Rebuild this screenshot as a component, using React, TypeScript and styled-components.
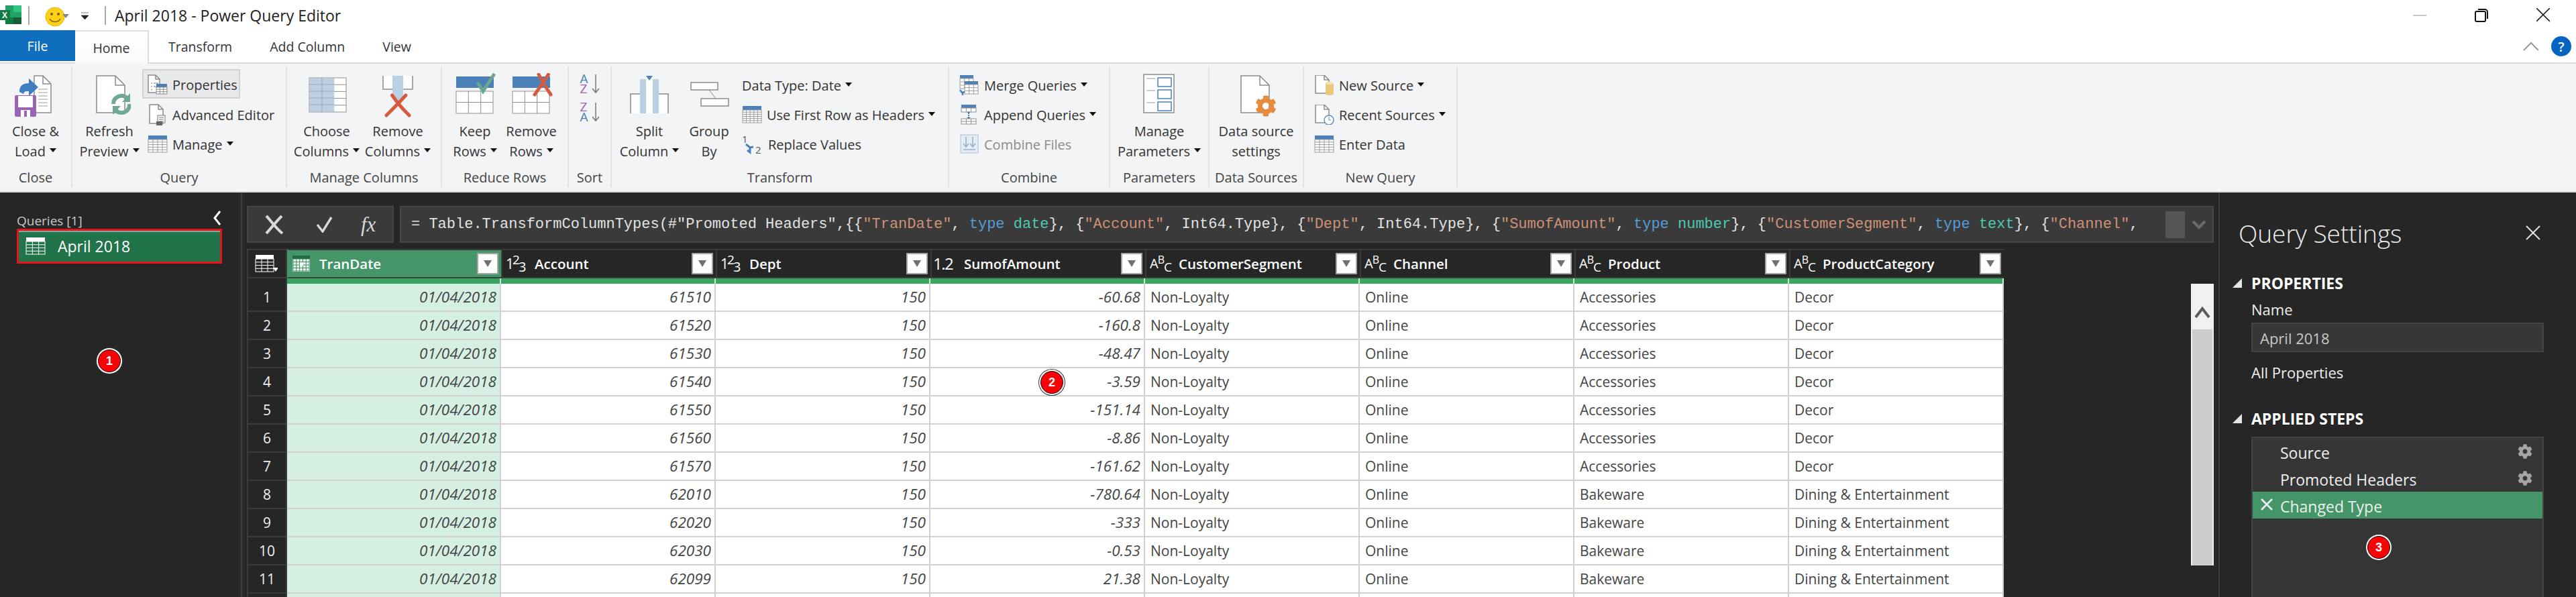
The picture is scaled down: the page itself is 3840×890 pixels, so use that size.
import React from 'react';
import styled, { createGlobalStyle } from 'styled-components';
import { FaCog } from 'react-icons/fa';

const GlobalStyle = createGlobalStyle`
  html, body {
    margin: 0;
    padding: 0;
    width: 3840px;
    height: 890px;
    overflow: hidden;
    background: #262626;
    font-family: "Open Sans", "Noto Sans", sans-serif;
  }
  * { box-sizing: border-box; }
`;

const Page = styled.div`
  width: 3840px;
  height: 890px;
  display: flex;
  flex-direction: column;
  overflow: hidden;
`;

/* title bar */
const TitleBar = styled.div`
  height: 45px;
  background: #fff;
  display: flex;
  align-items: center;
  flex: none;
`;

const QatDivider = styled.div<{ $left?: number }>`
  width: 2px;
  height: 28px;
  margin-left: ${(p) => p.$left || 0}px;
  background: #a8a8a8;
`;

const QatGlyph = styled.svg<{ $left: number }>`
  margin-left: ${(p) => p.$left}px;
`;

const TitleText = styled.div`
  margin-left: 13px;
  font-size: 23px;
  color: #222;
`;

const WindowButtons = styled.div`
  margin-left: auto;
  display: flex;
  align-items: center;
  gap: 72px;
  padding-right: 39px;
`;

const Caret = styled.span`
  display: inline-block;
  width: 0;
  height: 0;
  margin-left: 6px;
  vertical-align: 6px;
  border-left: 5px solid transparent;
  border-right: 5px solid transparent;
  border-top: 6px solid #111;
`;

/* tabs */
const TabRow = styled.div`
  height: 48px;
  background: #fff;
  display: flex;
  flex: none;
  position: relative;
  z-index: 1;
`;

const FileTab = styled.div`
  width: 112px;
  height: 46px;
  background: #106ebe;
  color: #fff;
  font-size: 19.5px;
  display: flex;
  align-items: center;
  justify-content: center;
`;

const Tab = styled.div<{ $active?: boolean }>`
  height: ${(p) => (p.$active ? '50px' : '48px')};
  padding: 0 ${(p) => (p.$active ? '0' : '28px')};
  width: ${(p) => (p.$active ? '110px' : 'auto')};
  margin-right: ${(p) => (p.$active ? '1px' : '0')};
  flex: none;
  display: flex;
  align-items: center;
  justify-content: center;
  font-size: 19.5px;
  color: #333;
  background: #fff;
  white-space: nowrap;
  ${(p) => p.$active && 'border: 2px solid #dcdcdc; border-bottom: none; border-left: none; background: linear-gradient(#fff, #f9f9fa);'}
`;

const TabTools = styled.div`
  margin-left: auto;
  display: flex;
  align-items: center;
  gap: 18px;
  padding: 0 7px 0 0;
`;

const HelpDot = styled.div`
  width: 30px;
  height: 30px;
  border-radius: 50%;
  background: #0563c1;
  color: #fff;
  font-size: 20px;
  font-weight: 600;
  display: flex;
  align-items: center;
  justify-content: center;
`;

/* ribbon */
const Ribbon = styled.div`
  height: 194px;
  flex: none;
  display: flex;
  align-items: flex-start;
  background: #f3f4f6;
  border-top: 2px solid #dcdcdc;
  border-bottom: 2px solid #d9d9d9;
  padding-top: 4px;
`;

const Group = styled.div<{ $w: number }>`
  width: ${(p) => p.$w}px;
  height: 180px;
  flex: none;
  display: flex;
  flex-direction: column;
  border-right: 2px solid #e2e3e5;
  font-size: 20px;
  color: #333;
`;

const GroupBody = styled.div<{ $pad?: number }>`
  flex: 1;
  display: flex;
  padding-left: ${(p) => p.$pad || 0}px;
`;

const GroupLabel = styled.div`
  height: 28px;
  line-height: 28px;
  text-align: center;
  font-size: 20px;
  color: #444;
  white-space: nowrap;
`;

const BigButton = styled.div<{ $w: number }>`
  width: ${(p) => p.$w}px;
  flex: none;
  display: flex;
  flex-direction: column;
  align-items: center;
`;

const BigIcon = styled.div`
  height: 82px;
  padding-top: 10px;
  display: flex;
  justify-content: center;
`;

const BigLine = styled.div`
  height: 30px;
  line-height: 30px;
  white-space: nowrap;
`;

const SmallColumn = styled.div<{ $pad?: number }>`
  display: flex;
  flex-direction: column;
  align-items: flex-start;
  padding-left: ${(p) => p.$pad || 0}px;
  padding-top: 4px;
`;

const SmallRow = styled.div<{ $hot?: boolean; $dim?: boolean }>`
  height: 44px;
  padding: 4px 8px 0 8px;
  display: flex;
  align-items: center;
  gap: 7px;
  white-space: nowrap;
  color: ${(p) => (p.$dim ? '#8b8b8b' : '#333')};
  ${(p) => p.$hot && 'background: #e8e9eb; border: 2px solid #d2d2d2; padding: 2px 2px 0 6px;'}
`;

const SortColumn = styled.div`
  width: 62px;
  display: flex;
  flex-direction: column;
  align-items: center;
  gap: 12px;
  padding-top: 11px;
`;

const SortMark = styled.div`
  display: flex;
  align-items: flex-start;
  gap: 5px;
`;

const SortLetters = styled.div`
  display: flex;
  flex-direction: column;
  font-size: 19px;
  line-height: 15px;
`;

const SortLetter = styled.span<{ $color: string }>`
  color: ${(p) => p.$color};
`;

/* main */
const Main = styled.div`
  flex: 1;
  display: flex;
  min-height: 0;
`;

const QueriesPane = styled.div`
  width: 361px;
  flex: none;
  border-right: 2px solid #3e3e3e;
  padding: 29px 28px 0 25px;
  position: relative;
`;

const PaneHead = styled.div`
  height: 25px;
  display: flex;
  justify-content: space-between;
  align-items: center;
  color: #c8c8c8;
  font-size: 19px;
`;

const CollapseIcon = styled.svg`
  margin-top: -8px;
`;

const QueryItem = styled.div`
  height: 52px;
  background: #21734a;
  border: 3px solid #e8141c;
  box-shadow: inset 0 2px 0 #8aa897;
  display: flex;
  align-items: center;
  gap: 18px;
  padding-left: 10px;
  color: #fff;
  font-size: 23px;
`;

const Badge = styled.div<{ $x: number; $y: number }>`
  position: absolute;
  left: ${(p) => p.$x}px;
  top: ${(p) => p.$y}px;
  width: 34px;
  height: 34px;
  border-radius: 50%;
  background: #fb0007;
  border: 1px solid #111;
  box-shadow: 0 0 0 2px #fff, 0 0 0 3px #333;
  color: #fff;
  font: bold 18px "Liberation Sans", sans-serif;
  display: flex;
  align-items: center;
  justify-content: center;
  z-index: 2;
`;

const Center = styled.div`
  width: 2948px;
  flex: none;
  padding: 20px 7px 0 7px;
  border-right: 2px solid #3e3e3e;
`;

const FormulaBar = styled.div`
  display: flex;
  gap: 9px;
  height: 55px;
`;

const FormulaButtons = styled.div`
  width: 219px;
  flex: none;
  background: #3a3a3a;
  border: 2px solid #464646;
  display: flex;
  align-items: center;
  padding-left: 24px;
  gap: 47px;
`;

const FxText = styled.span`
  font: italic 31px "Liberation Serif", serif;
  color: #d8d8d8;
  margin-left: -6px;
`;

const FormulaInput = styled.div`
  flex: 1;
  min-width: 0;
  background: #3a3a3a;
  border: 2px solid #464646;
  display: flex;
  align-items: center;
  padding-left: 15px;
`;

const FormulaText = styled.div`
  flex: 1;
  min-width: 0;
  overflow: hidden;
  white-space: pre;
  font: 22px "Liberation Mono", monospace;
  line-height: 30px;
  color: #e2e2e2;
`;

const Str = styled.span` color: #ce9178; `;
const Kw = styled.span` color: #569cd6; `;
const Ty = styled.span` color: #4ec9b0; `;

const FormulaThumb = styled.div`
  width: 29px;
  height: 40px;
  background: #555;
  flex: none;
`;

const FormulaChevron = styled.div`
  width: 41px;
  flex: none;
  display: flex;
  justify-content: center;
`;

const GridArea = styled.div`
  margin-top: 9px;
  display: flex;
  justify-content: space-between;
  position: relative;
`;

const Grid = styled.div`
  display: grid;
  grid-template-columns: 60px 319px repeat(7, 320px);
  grid-auto-rows: auto;
  width: 2619px;
`;

const HeadCell = styled.div<{ $selected?: boolean }>`
  height: 44px;
  background: ${(p) => (p.$selected ? '#449669' : '#262626')};
  border-top: 2px solid #3c3c3c;
  border-bottom: 2px solid #3c3c3c;
  border-left: 2px solid ${(p) => (p.$selected ? '#449669' : '#3c3c3c')};
  display: flex;
  align-items: center;
  padding: 0 4px 0 5px;
  gap: 13px;
  color: #fff;
  font-size: 20.5px;
  font-weight: 600;
`;

const CornerCell = styled(HeadCell)`
  border-right: 2px solid #3c3c3c;
  padding: 0 0 0 10px;
`;

const HeadName = styled.span`
  flex: 1;
  white-space: nowrap;
`;

const FilterButton = styled.div`
  width: 32px;
  height: 32px;
  background: #fff;
  border: 2px solid #a5a5a5;
  display: flex;
  align-items: center;
  justify-content: center;
  flex: none;
  &::after {
    content: '';
    border-left: 6px solid transparent;
    border-right: 6px solid transparent;
    border-top: 10px solid #6f6f6f;
  }
`;

const TypeGlyph = styled.span`
  width: 30px;
  flex: none;
  font-size: 21px;
  font-weight: 400;
  display: flex;
  align-items: center;
  line-height: 1;
  white-space: nowrap;
`;

const DecimalGlyph = styled(TypeGlyph)`
  font-size: 24px;
  letter-spacing: -1.5px;
  margin-left: -3px;
  margin-right: 3px;
`;

const BaseLetter = styled.span`
  font-size: 20px;
`;

const SupGlyph = styled.span<{ $small?: boolean }>`
  font-size: ${(p) => (p.$small ? 16 : 19)}px;
  margin-left: ${(p) => (p.$small ? -1 : -2)}px;
  transform: translateY(-6px);
`;

const SubGlyph = styled.span<{ $small?: boolean }>`
  font-size: ${(p) => (p.$small ? 19 : 20)}px;
  margin-left: ${(p) => (p.$small ? -1 : -2)}px;
  transform: translateY(5px);
`;

const QualityNum = styled.div`
  height: 8px;
  background: #262626;
  border-left: 2px solid #3c3c3c;
  border-right: 2px solid #3c3c3c;
`;

const QualityBar = styled.div`
  height: 8px;
  background: #38a560;
  border-right: 2px solid #cfe9da;
`;

const RowNum = styled.div`
  height: 42px;
  background: #262626;
  border: 2px solid #3c3c3c;
  border-top: none;
  color: #f0f0f0;
  font-size: 21px;
  display: flex;
  align-items: center;
  justify-content: center;
`;

const Cell = styled.div<{ $num?: boolean; $selected?: boolean }>`
  height: 42px;
  background: ${(p) => (p.$selected ? '#d5f0e2' : '#fff')};
  border-bottom: 2px solid #d0d0d0;
  border-right: 2px solid #d0d0d0;
  color: #444;
  font-size: ${(p) => (p.$num ? 22.5 : 21)}px;
  font-style: ${(p) => (p.$num ? 'italic' : 'normal')};
  text-align: ${(p) => (p.$num ? 'right' : 'left')};
  padding: 0 5px 0 8px;
  line-height: 40px;
  white-space: nowrap;
  overflow: hidden;
`;

const ScrollBar = styled.div`
  width: 34px;
  margin-top: 52px;
  height: 420px;
  flex: none;
  background: #f0f0f0;
  display: flex;
  flex-direction: column;
`;

const ScrollUp = styled.div`
  height: 68px;
  flex: none;
  padding-bottom: 16px;
  display: flex;
  align-items: flex-end;
  justify-content: center;
`;

const ScrollThumb = styled.div`
  flex: 1;
  margin: 0 2px;
  background: #cdcdcd;
`;

/* query settings */
const SettingsPane = styled.div`
  flex: 1;
  padding: 31px 48px 0 47px;
  color: #f0f0f0;
`;

const SettingsHead = styled.div`
  display: flex;
  justify-content: space-between;
  align-items: center;
  margin-left: -19px;
  height: 58px;
  font-size: 37px;
  font-weight: 300;
  color: #eee;
  padding-right: 5px;
`;

const SectionTitle = styled.div<{ $top: number }>`
  position: relative;
  margin-top: ${(p) => p.$top}px;
  font-size: 23px;
  font-weight: 700;
  color: #fff;
  height: 30px;
  line-height: 30px;
  white-space: nowrap;
  &::before {
    content: '';
    position: absolute;
    left: -28px;
    top: 8px;
    border-left: 14px solid transparent;
    border-bottom: 14px solid #e6e6e6;
  }
`;

const FieldLabel = styled.div<{ $top: number }>`
  margin-top: ${(p) => p.$top}px;
  font-size: 22px;
  height: 30px;
  line-height: 30px;
  color: #eee;
`;

const NameInput = styled.div`
  height: 44px;
  margin-top: 5px;
  background: #373737;
  border: 2px solid #444;
  padding-left: 11px;
  line-height: 42px;
  font-size: 22px;
  color: #c8c8c8;
`;

const StepsBox = styled.div`
  position: relative;
  height: 300px;
  margin-top: 12px;
  background: #363636;
  border: 2px solid #444;
`;

const Step = styled.div<{ $selected?: boolean }>`
  height: 40px;
  display: flex;
  align-items: center;
  padding: 0 15px 0 41px;
  font-size: 23px;
  background: ${(p) => (p.$selected ? '#449669' : 'transparent')};
  color: #eee;
  position: relative;
`;

const StepName = styled.span`
  flex: 1;
  padding-top: 4px;
`;

const StepDelete = styled.span`
  position: absolute;
  left: 11px;
  top: 9px;
  display: flex;
`;

const COLUMNS: { name: string; type: 'date' | 'int' | 'dec' | 'text' }[] = [
  { name: 'TranDate', type: 'date' },
  { name: 'Account', type: 'int' },
  { name: 'Dept', type: 'int' },
  { name: 'SumofAmount', type: 'dec' },
  { name: 'CustomerSegment', type: 'text' },
  { name: 'Channel', type: 'text' },
  { name: 'Product', type: 'text' },
  { name: 'ProductCategory', type: 'text' },
];

const ACCOUNTS = ['61510', '61520', '61530', '61540', '61550', '61560', '61570', '62010', '62020', '62030', '62099'];
const AMOUNTS = ['-60.68', '-160.8', '-48.47', '-3.59', '-151.14', '-8.86', '-161.62', '-780.64', '-333', '-0.53', '21.38'];

// draws a ruled table, used by most of the ribbon icons
const Ruled = ({ x, y, w, h, cols, rows, stroke = '#8e8e8e', fill = '#fff' }: {
  x: number; y: number; w: number; h: number; cols: number; rows: number; stroke?: string; fill?: string;
}) => {
  const lines = [];
  for (let i = 1; i < cols; i += 1) {
    const lx = x + (w * i) / cols;
    lines.push(<line key={`c${i}`} x1={lx} x2={lx} y1={y} y2={y + h} stroke={stroke} />);
  }
  for (let i = 1; i < rows; i += 1) {
    const ly = y + (h * i) / rows;
    lines.push(<line key={`r${i}`} x1={x} x2={x + w} y1={ly} y2={ly} stroke={stroke} />);
  }
  return (
    <g>
      <rect x={x} y={y} width={w} height={h} fill={fill} stroke={stroke} />
      {lines}
    </g>
  );
};

const PageShape = ({ x, y, w, h, fold = 12 }: { x: number; y: number; w: number; h: number; fold?: number }) => (
  <g fill="#fff" stroke="#8a8a8a" strokeWidth="1.5">
    <path d={`M${x} ${y}H${x + w - fold}L${x + w} ${y + fold}V${y + h}H${x}Z`} />
    <path d={`M${x + w - fold} ${y}V${y + fold}H${x + w}`} fill="none" />
  </g>
);

const RedCross = ({ x, y, w, h }: { x: number; y: number; w: number; h: number }) => (
  <g stroke="#d65a3c" strokeWidth="5" strokeLinecap="round" fill="none">
    <path d={`M${x + w * 0.25} ${y}Q${x + w * 0.55} ${y + h * 0.5} ${x + w} ${y + h}`} />
    <path d={`M${x + w * 0.85} ${y}Q${x + w * 0.45} ${y + h * 0.5} ${x} ${y + h}`} />
  </g>
);

const CloseLoadIcon = () => (
  <svg width="64" height="66" viewBox="0 0 64 66">
    <PageShape x={30} y={4} w={25} h={55} fold={12} />
    <g stroke="#9a9a9a">{[24, 29, 34, 39, 44, 49].map((y) => <line key={y} x1="36" x2="50" y1={y} y2={y} />)}</g>
    <path d="M8 28c0-10 6-13 14-13V8l14 13-14 13v-7c-5 0-7 0-8 4z" fill="#3f7fbf" />
    <rect x="1" y="33" width="32" height="32" rx="2" fill="#9a63b5" />
    <rect x="6" y="34" width="22" height="17" fill="#fff" />
    <rect x="10" y="55" width="14" height="10" fill="#fff" />
    <rect x="15" y="56" width="4" height="9" fill="#9a63b5" />
  </svg>
);

const RefreshIcon = () => (
  <svg width="64" height="66" viewBox="0 0 64 66">
    <PageShape x={13} y={4} w={42} h={55} fold={14} />
    <g fill="none" stroke="#6fa894" strokeWidth="6">
      <path d="M38 46a12 12 0 0 1 20-9" />
      <path d="M62 46a12 12 0 0 1-20 10" />
    </g>
    <path d="M63 30v13H51z" fill="#6fa894" />
    <path d="M37 62V49h12z" fill="#6fa894" />
  </svg>
);

const PropertiesIcon = () => (
  <svg width="30" height="30" viewBox="0 0 30 30">
    <PageShape x={1} y={1} w={17} h={26} fold={6} />
    <g stroke="#777" fill="none">
      <path d="M5 13h2M5 18h2M5 23h2M9 13h7M9 18h5" />
    </g>
    <rect x="13" y="14" width="16" height="5" fill="#4b80b8" />
    <Ruled x={13} y={19} w={16} h={10} cols={3} rows={3} />
  </svg>
);

const AdvancedEditorIcon = () => (
  <svg width="30" height="32" viewBox="0 0 30 32">
    <PageShape x={3} y={1} w={20} h={28} fold={7} />
    <rect x="15" y="17" width="11" height="11" fill="#fff" stroke="#777" />
    <path d="M17 20h7M17 23h7M17 26h7" stroke="#777" />
    <rect x="13" y="26" width="9" height="6" fill="#666" />
  </svg>
);

const TableIcon = ({ w = 28, h = 26, cols = 4, rows = 5 }: { w?: number; h?: number; cols?: number; rows?: number }) => (
  <svg width={w + 2} height={h} viewBox={`0 0 ${w + 2} ${h}`}>
    <rect x="1" y="0" width={w} height="6" fill="#4b80b8" />
    <Ruled x={1} y={6} w={w} h={h - 7} cols={cols} rows={rows} stroke="#9c9c9c" />
  </svg>
);

const ChooseColumnsIcon = () => (
  <svg width="64" height="66" viewBox="0 0 64 66">
    <Ruled x={6} y={7} w={55} h={51} cols={3} rows={5} stroke="#8e8e8e" />
    <rect x="7" y="8" width="36" height="49" fill="#bcd0e4" />
    <g stroke="#9aa9b8">
      <line x1="25" x2="25" y1="8" y2="57" />
      {[17, 27, 37, 47].map((y) => <line key={y} x1="7" x2="43" y1={y} y2={y} />)}
    </g>
  </svg>
);

const RemoveColumnsIcon = () => (
  <svg width="64" height="66" viewBox="0 0 64 66">
    <path d="M10 4v20h44V4" fill="#fff" stroke="#8a8a8a" strokeWidth="1.5" />
    <path d="M24 4h16v30l-8 8-8-8z" fill="#bcd0e4" />
    <RedCross x={15} y={33} w={34} h={30} />
  </svg>
);

const RowsIcon = ({ kind }: { kind: 'keep' | 'remove' }) => (
  <svg width="64" height="66" viewBox="0 0 64 66">
    <rect x="4" y="5" width="56" height="17" fill="#4b80b8" />
    <Ruled x={4} y={27} w={55} h={33} cols={3} rows={2} stroke="#8e8e8e" />
    {kind === 'keep'
      ? <path d="M36 14l8 13 17-26" fill="none" stroke="#6ea591" strokeWidth="5" />
      : <RedCross x={37} y={2} w={24} h={30} />}
  </svg>
);

const SortIcon = ({ top, bottom, topColor, bottomColor }: { top: string; bottom: string; topColor: string; bottomColor: string }) => (
  <SortMark>
    <SortLetters>
      <SortLetter $color={topColor}>{top}</SortLetter>
      <SortLetter $color={bottomColor}>{bottom}</SortLetter>
    </SortLetters>
    <svg width="12" height="30" viewBox="0 0 12 30">
      <path d="M6 1v27M1 22l5 6 5-6" fill="none" stroke="#777" strokeWidth="1.5" />
    </svg>
  </SortMark>
);

const SplitIcon = () => (
  <svg width="64" height="66" viewBox="0 0 64 66">
    <path d="M4 60V31h56v29" fill="#fff" stroke="#8a8a8a" strokeWidth="1.5" />
    <rect x="18" y="9" width="9" height="51" fill="#bcd0e4" />
    <rect x="37" y="9" width="9" height="51" fill="#bcd0e4" />
    <rect x="27" y="9" width="10" height="51" fill="#fff" />
    <path d="M27 4h10l-5 7z" fill="#4b80b8" />
  </svg>
);

const GroupByIcon = () => (
  <svg width="64" height="66" viewBox="0 0 64 66">
    <rect x="5" y="14" width="40" height="11" fill="#fff" stroke="#8a8a8a" strokeWidth="1.5" />
    <rect x="20" y="38" width="41" height="11" fill="#fff" stroke="#8a8a8a" strokeWidth="1.5" />
    <path d="M32 25l10 13" stroke="#8a8a8a" />
  </svg>
);

const MergeIcon = () => (
  <svg width="30" height="30" viewBox="0 0 30 30">
    <rect x="1" y="0" width="20" height="5" fill="#4b80b8" />
    <Ruled x={1} y={5} w={20} h={15} cols={3} rows={3} stroke="#9c9c9c" />
    <rect x="8" y="9" width="20" height="5" fill="#4b80b8" />
    <Ruled x={8} y={14} w={20} h={14} cols={3} rows={3} stroke="#9c9c9c" />
    <path d="M1 22l3 4 4-1m-3 1v4" fill="none" stroke="#4b80b8" strokeWidth="2.5" />
  </svg>
);

const AppendIcon = () => (
  <svg width="30" height="30" viewBox="0 0 30 30">
    <rect x="3" y="0" width="22" height="5" fill="#4b80b8" />
    <Ruled x={3} y={5} w={22} h={6} cols={3} rows={1} stroke="#8e8e8e" />
    <path d="M14 12v8" stroke="#4b80b8" strokeDasharray="2 1" strokeWidth="2" />
    <path d="M11 12h6l-3-2zM11 19h6l-3 3z" fill="#4b80b8" />
    <Ruled x={3} y={21} w={22} h={8} cols={3} rows={2} stroke="#8e8e8e" />
  </svg>
);

const CombineIcon = () => (
  <svg width="30" height="30" viewBox="0 0 30 30">
    <rect x="2" y="1" width="26" height="27" fill="#e6ecf3" stroke="#bcd0e4" strokeWidth="1.5" />
    <path d="M10 4v15m-4-5l4 5 4-5M20 4v15m-4-5l4 5 4-5" fill="none" stroke="#8fb0d0" strokeWidth="1.5" />
    <rect x="6" y="22" width="18" height="2" fill="#a7c0da" />
  </svg>
);

const ReplaceIcon = () => (
  <svg width="32" height="30" viewBox="0 0 32 30">
    <text x="0" y="13" fontFamily='"Open Sans", sans-serif' fontSize="15" fill="#555">1</text>
    <text x="20" y="29" fontFamily='"Open Sans", sans-serif' fontSize="15" fill="#555">2</text>
    <path d="M6 15l6 5 5-1m-5 1v7l-4-3" fill="none" stroke="#4b80b8" strokeWidth="3" />
  </svg>
);

const ParametersIcon = () => (
  <svg width="64" height="66" viewBox="0 0 64 66">
    <rect x="9" y="2" width="45" height="57" fill="#fff" stroke="#8a8a8a" strokeWidth="1.5" />
    <g fill="#fff" stroke="#4b80b8" strokeWidth="1.5">
      <rect x="30" y="7" width="20" height="13" />
      <rect x="30" y="25" width="20" height="13" />
      <rect x="30" y="43" width="20" height="13" />
    </g>
    <path d="M13 8h13M13 26h13M13 44h13" stroke="#999" />
  </svg>
);

const DataSourceIcon = () => (
  <svg width="64" height="66" viewBox="0 0 64 66">
    <PageShape x={9} y={4} w={42} h={55} fold={14} />
    <foreignObject x="30" y="33" width="34" height="33">
      <FaCog size={32} color="#e78c3c" />
    </foreignObject>
  </svg>
);

const NewSourceIcon = () => (
  <svg width="30" height="30" viewBox="0 0 30 30">
    <PageShape x={2} y={0} w={20} h={27} fold={7} />
    <path d="M17 12a6 2 0 0 1 12 0v16a6 2 0 0 1-12 0z" fill="#edc77a" />
    <ellipse cx="23" cy="12" rx="6" ry="2" fill="#f7e3b5" />
  </svg>
);

const RecentSourceIcon = () => (
  <svg width="30" height="30" viewBox="0 0 30 30">
    <PageShape x={2} y={0} w={20} h={27} fold={7} />
    <circle cx="22" cy="23" r="7" fill="#fff" stroke="#5c8fbf" strokeWidth="1.5" />
    <path d="M22 18v5h3" fill="none" stroke="#5c8fbf" />
  </svg>
);

const TypeIcon = ({ type }: { type: string }) => {
  if (type === 'date') {
    return (
      <svg width="28" height="26" viewBox="0 0 28 26">
        <rect x="1" y="1" width="26" height="24" fill="#e9f5ee" />
        <rect x="1" y="1" width="26" height="5" fill="#1f6b43" />
        <Ruled x={2} y={6} w={24} h={18} cols={5} rows={4} stroke="#3f8c63" fill="none" />
        <rect x="12" y="11" width="5" height="5" fill="#fff" />
      </svg>
    );
  }
  if (type === 'int') {
    return <TypeGlyph>1<SupGlyph>2</SupGlyph><SubGlyph>3</SubGlyph></TypeGlyph>;
  }
  if (type === 'dec') {
    return <DecimalGlyph>1.2</DecimalGlyph>;
  }
  return <TypeGlyph><BaseLetter>A</BaseLetter><SupGlyph $small>B</SupGlyph><SubGlyph $small>C</SubGlyph></TypeGlyph>;
};

const App = () => {
  const rows = Array.from({ length: 12 }, (_, i) => i);
  return (
    <Page>
      <GlobalStyle />
      <TitleBar>
        <svg width="42" height="45" viewBox="0 0 42 45">
          <rect x="8" y="8" width="24" height="28" fill="#21a366" />
          <rect x="20" y="8" width="12" height="10" fill="#33c481" />
          <rect x="20" y="26" width="12" height="10" fill="#185c37" />
          <rect x="8" y="26" width="12" height="10" fill="#107c41" />
          <rect x="0" y="15" width="15" height="15" fill="#107c41" />
          <text x="3" y="27" fill="#fff" fontFamily='"Liberation Sans", sans-serif' fontWeight="bold" fontSize="12">X</text>
        </svg>
        <QatDivider />
        <QatGlyph $left={14} width="52" height="45" viewBox="0 0 52 45">
          <ellipse cx="24" cy="25" rx="14" ry="14" fill="#fcd116" stroke="#e9b800" />
          <circle cx="19" cy="21" r="2" fill="#7a5b00" />
          <circle cx="29" cy="21" r="2" fill="#7a5b00" />
          <path d="M16 28c3 6 13 6 16 0" fill="none" stroke="#7a5b00" strokeWidth="1.5" />
          <path d="M35 21h10l-5 6z" fill="#888" />
        </QatGlyph>
        <QatGlyph $left={6} width="24" height="45" viewBox="0 0 24 45">
          <path d="M5 19h11M5 23h11l-5.5 6z" fill="#222" stroke="#222" strokeWidth="0.6" />
        </QatGlyph>
        <QatDivider $left={16} />
        <TitleText>April 2018 - Power Query Editor</TitleText>
        <WindowButtons>
          <svg width="20" height="4" viewBox="0 0 20 4"><rect width="20" height="2" y="1" fill="#c8c8c8" /></svg>
          <svg width="20" height="21" viewBox="0 0 20 21">
            <rect x="1" y="5" width="15" height="15" rx="2" fill="none" stroke="#111" strokeWidth="2" />
            <path d="M5 2h10a4 4 0 0 1 4 4v10" fill="none" stroke="#111" strokeWidth="2" />
          </svg>
          <svg width="20" height="21" viewBox="0 0 20 21"><path d="M0 0l20 20M20 0L0 20" stroke="#222" strokeWidth="1.6" /></svg>
        </WindowButtons>
      </TitleBar>

      <TabRow>
        <FileTab>File</FileTab>
        <Tab $active>Home</Tab>
        <Tab>Transform</Tab>
        <Tab>Add Column</Tab>
        <Tab>View</Tab>
        <TabTools>
          <svg width="24" height="14" viewBox="0 0 24 14"><path d="M1 13L12 2l11 11" fill="none" stroke="#999" strokeWidth="2" /></svg>
          <HelpDot>?</HelpDot>
        </TabTools>
      </TabRow>

      <Ribbon>
        <Group $w={108}>
          <GroupBody>
            <BigButton $w={106}>
              <BigIcon><CloseLoadIcon /></BigIcon>
              <BigLine>Close &amp;</BigLine>
              <BigLine>Load<Caret /></BigLine>
            </BigButton>
          </GroupBody>
          <GroupLabel>Close</GroupLabel>
        </Group>
        <Group $w={320}>
          <GroupBody $pad={6}>
            <BigButton $w={98}>
              <BigIcon><RefreshIcon /></BigIcon>
              <BigLine>Refresh</BigLine>
              <BigLine>Preview<Caret /></BigLine>
            </BigButton>
            <SmallColumn>
              <SmallRow $hot><PropertiesIcon />Properties</SmallRow>
              <SmallRow><AdvancedEditorIcon />Advanced Editor</SmallRow>
              <SmallRow><TableIcon /><span>Manage<Caret /></span></SmallRow>
            </SmallColumn>
          </GroupBody>
          <GroupLabel>Query</GroupLabel>
        </Group>
        <Group $w={231}>
          <GroupBody $pad={6}>
            <BigButton $w={106}>
              <BigIcon><ChooseColumnsIcon /></BigIcon>
              <BigLine>Choose</BigLine>
              <BigLine>Columns<Caret /></BigLine>
            </BigButton>
            <BigButton $w={106}>
              <BigIcon><RemoveColumnsIcon /></BigIcon>
              <BigLine>Remove</BigLine>
              <BigLine>Columns<Caret /></BigLine>
            </BigButton>
          </GroupBody>
          <GroupLabel>Manage Columns</GroupLabel>
        </Group>
        <Group $w={189}>
          <GroupBody $pad={7}>
            <BigButton $w={84}>
              <BigIcon><RowsIcon kind="keep" /></BigIcon>
              <BigLine>Keep</BigLine>
              <BigLine>Rows<Caret /></BigLine>
            </BigButton>
            <BigButton $w={84}>
              <BigIcon><RowsIcon kind="remove" /></BigIcon>
              <BigLine>Remove</BigLine>
              <BigLine>Rows<Caret /></BigLine>
            </BigButton>
          </GroupBody>
          <GroupLabel>Reduce Rows</GroupLabel>
        </Group>
        <Group $w={64}>
          <GroupBody>
            <SortColumn>
              <SortIcon top="A" bottom="Z" topColor="#4b80b8" bottomColor="#9a63b5" />
              <SortIcon top="Z" bottom="A" topColor="#9a63b5" bottomColor="#4b80b8" />
            </SortColumn>
          </GroupBody>
          <GroupLabel>Sort</GroupLabel>
        </Group>
        <Group $w={503}>
          <GroupBody $pad={6}>
            <BigButton $w={100}>
              <BigIcon><SplitIcon /></BigIcon>
              <BigLine>Split</BigLine>
              <BigLine>Column<Caret /></BigLine>
            </BigButton>
            <BigButton $w={78}>
              <BigIcon><GroupByIcon /></BigIcon>
              <BigLine>Group</BigLine>
              <BigLine>By</BigLine>
            </BigButton>
            <SmallColumn $pad={2}>
              <SmallRow><span>Data Type: Date<Caret /></span></SmallRow>
              <SmallRow><TableIcon cols={5} rows={6} /><span>Use First Row as Headers<Caret /></span></SmallRow>
              <SmallRow><ReplaceIcon />Replace Values</SmallRow>
            </SmallColumn>
          </GroupBody>
          <GroupLabel>Transform</GroupLabel>
        </Group>
        <Group $w={240}>
          <GroupBody $pad={7}>
            <SmallColumn>
              <SmallRow><MergeIcon /><span>Merge Queries<Caret /></span></SmallRow>
              <SmallRow><AppendIcon /><span>Append Queries<Caret /></span></SmallRow>
              <SmallRow $dim><CombineIcon />Combine Files</SmallRow>
            </SmallColumn>
          </GroupBody>
          <GroupLabel>Combine</GroupLabel>
        </Group>
        <Group $w={148}>
          <GroupBody>
            <BigButton $w={146}>
              <BigIcon><ParametersIcon /></BigIcon>
              <BigLine>Manage</BigLine>
              <BigLine>Parameters<Caret /></BigLine>
            </BigButton>
          </GroupBody>
          <GroupLabel>Parameters</GroupLabel>
        </Group>
        <Group $w={141}>
          <GroupBody>
            <BigButton $w={139}>
              <BigIcon><DataSourceIcon /></BigIcon>
              <BigLine>Data source</BigLine>
              <BigLine>settings</BigLine>
            </BigButton>
          </GroupBody>
          <GroupLabel>Data Sources</GroupLabel>
        </Group>
        <Group $w={229}>
          <GroupBody $pad={7}>
            <SmallColumn>
              <SmallRow><NewSourceIcon /><span>New Source<Caret /></span></SmallRow>
              <SmallRow><RecentSourceIcon /><span>Recent Sources<Caret /></span></SmallRow>
              <SmallRow><TableIcon />Enter Data</SmallRow>
            </SmallColumn>
          </GroupBody>
          <GroupLabel>New Query</GroupLabel>
        </Group>
      </Ribbon>

      <Main>
        <QueriesPane>
          <PaneHead>
            Queries [1]
            <CollapseIcon width="14" height="24" viewBox="0 0 14 24"><path d="M11 2L3 12l8 10" fill="none" stroke="#fff" strokeWidth="3" /></CollapseIcon>
          </PaneHead>
          <QueryItem>
            <svg width="30" height="28" viewBox="0 0 30 28">
              <rect x="1" y="1" width="28" height="6" fill="#fff" />
              <Ruled x={1} y={7} w={28} h={19} cols={3} rows={4} stroke="#fff" fill="none" />
            </svg>
            April 2018
          </QueryItem>
          <Badge $x={146} $y={234}>1</Badge>
        </QueriesPane>

        <Center>
          <FormulaBar>
            <FormulaButtons>
              <svg width="30" height="30" viewBox="0 0 30 30"><path d="M3 2c6 6 14 18 24 26M26 2C18 10 10 20 3 28" fill="none" stroke="#d8d8d8" strokeWidth="4" /></svg>
              <svg width="26" height="24" viewBox="0 0 26 24"><path d="M2 12l8 10L23 1" fill="none" stroke="#d8d8d8" strokeWidth="3.4" /></svg>
              <FxText>fx</FxText>
            </FormulaButtons>
            <FormulaInput>
              <FormulaText>
                = Table.TransformColumnTypes(#"Promoted Headers",{'{{'}<Str>"TranDate"</Str>, <Kw>type</Kw> <Ty>date</Ty>{'}'}, {'{'}<Str>"Account"</Str>, Int64.Type{'}'}, {'{'}<Str>"Dept"</Str>, Int64.Type{'}'}, {'{'}<Str>"SumofAmount"</Str>, <Kw>type</Kw> <Ty>number</Ty>{'}'}, {'{'}<Str>"CustomerSegment"</Str>, <Kw>type</Kw> <Ty>text</Ty>{'}'}, {'{'}<Str>"Channel"</Str>,
              </FormulaText>
              <FormulaThumb />
              <FormulaChevron>
                <svg width="22" height="14" viewBox="0 0 22 14"><path d="M2 2l9 9 9-9" fill="none" stroke="#6b6b6b" strokeWidth="4" /></svg>
              </FormulaChevron>
            </FormulaInput>
          </FormulaBar>

          <GridArea>
            <Grid>
              <CornerCell>
                <svg width="34" height="28" viewBox="0 0 34 28">
                  <rect x="1" y="1" width="27" height="6" fill="#fff" />
                  <Ruled x={1} y={7} w={27} h={19} cols={3} rows={4} stroke="#fff" fill="none" />
                  <path d="M27 20h8l-4 6z" fill="#fff" />
                </svg>
              </CornerCell>
              {COLUMNS.map((c, i) => (
                <HeadCell key={c.name} $selected={i === 0}>
                  <TypeIcon type={c.type} />
                  <HeadName>{c.name}</HeadName>
                  <FilterButton />
                </HeadCell>
              ))}
              <QualityNum />
              {COLUMNS.map((c) => <QualityBar key={c.name} />)}
              {rows.map((r) => (
                <React.Fragment key={r}>
                  <RowNum>{r < 11 ? r + 1 : ''}</RowNum>
                  <Cell $num $selected>{r < 11 ? '01/04/2018' : ''}</Cell>
                  <Cell $num>{ACCOUNTS[r]}</Cell>
                  <Cell $num>{r < 11 ? '150' : ''}</Cell>
                  <Cell $num>{AMOUNTS[r]}</Cell>
                  <Cell>{r < 11 ? 'Non-Loyalty' : ''}</Cell>
                  <Cell>{r < 11 ? 'Online' : ''}</Cell>
                  <Cell>{r < 7 ? 'Accessories' : r < 11 ? 'Bakeware' : ''}</Cell>
                  <Cell>{r < 7 ? 'Decor' : r < 11 ? 'Dining & Entertainment' : ''}</Cell>
                </React.Fragment>
              ))}
            </Grid>
            <Badge $x={1183} $y={182}>2</Badge>
            <ScrollBar>
              <ScrollUp>
                <svg width="24" height="18" viewBox="0 0 24 18"><path d="M2 16L12 3l10 13" fill="none" stroke="#5a5a5a" strokeWidth="4" /></svg>
              </ScrollUp>
              <ScrollThumb />
            </ScrollBar>
          </GridArea>
        </Center>

        <SettingsPane>
          <SettingsHead>
            Query Settings
            <svg width="22" height="22" viewBox="0 0 22 22"><path d="M1 1l20 20M21 1L1 21" stroke="#e8e8e8" strokeWidth="1.8" /></svg>
          </SettingsHead>
          <SectionTitle $top={31}>PROPERTIES</SectionTitle>
          <FieldLabel $top={9}>Name</FieldLabel>
          <NameInput>April 2018</NameInput>
          <FieldLabel $top={15}>All Properties</FieldLabel>
          <SectionTitle $top={39}>APPLIED STEPS</SectionTitle>
          <StepsBox>
            <Step><StepName>Source</StepName><FaCog size={22} color="#a5a5a5" /></Step>
            <Step><StepName>Promoted Headers</StepName><FaCog size={22} color="#a5a5a5" /></Step>
            <Step $selected>
              <StepDelete>
                <svg width="20" height="20" viewBox="0 0 20 20"><path d="M2 2c5 5 10 10 16 16M18 2C13 7 7 13 2 18" fill="none" stroke="#f0f0f0" strokeWidth="2.5" /></svg>
              </StepDelete>
              <StepName>Changed Type</StepName>
            </Step>
            <Badge $x={171} $y={146}>3</Badge>
          </StepsBox>
        </SettingsPane>
      </Main>
    </Page>
  );
};

export default App;
